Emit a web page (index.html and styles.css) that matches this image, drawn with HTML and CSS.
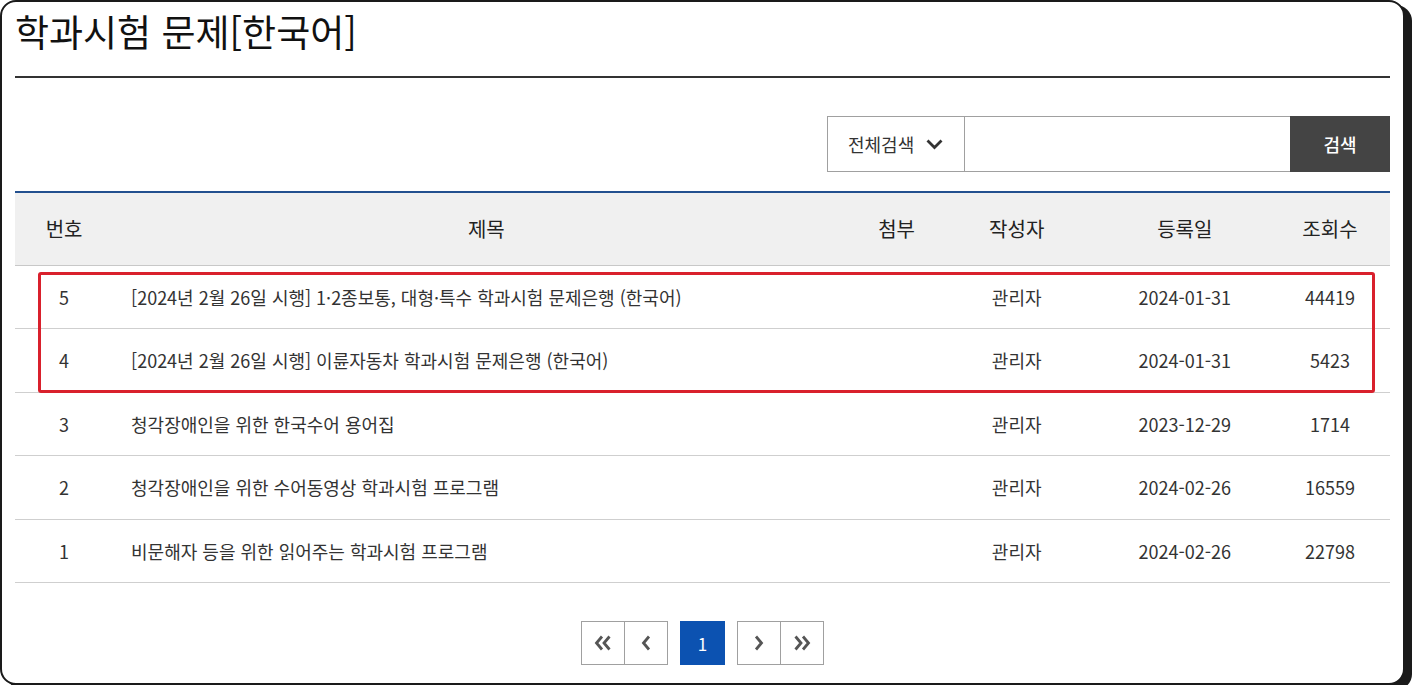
FILE: index.html
```html
<!DOCTYPE html>
<html lang="ko">
<head>
<meta charset="utf-8">
<title>학과시험 문제[한국어]</title>
<link rel="stylesheet" href="styles.css">
</head>
<body>
<div class="frame">
  <h1 class="page-title">학과시험 문제[한국어]</h1>

  <form class="search">
    <div class="search-select">
      <span>전체검색</span>
      <svg class="chev-down" width="17" height="11" viewBox="0 0 17 11"><path d="M1.5 1.5 L8.5 8.5 L15.5 1.5" fill="none" stroke="#333" stroke-width="2.8"/></svg>
    </div>
    <input class="search-input" type="text" aria-label="검색어">
    <button class="search-btn" type="button">검색</button>
  </form>

  <div class="board">
    <table class="board-table">
      <colgroup>
        <col class="c-no"><col class="c-title"><col class="c-file"><col class="c-writer"><col class="c-date"><col class="c-hit">
      </colgroup>
      <thead>
        <tr><th>번호</th><th>제목</th><th>첨부</th><th>작성자</th><th>등록일</th><th>조회수</th></tr>
      </thead>
      <tbody>
        <tr><td>5</td><td class="t">[2024년 2월 26일 시행] 1·2종보통, 대형·특수 학과시험 문제은행 (한국어)</td><td></td><td>관리자</td><td>2024-01-31</td><td>44419</td></tr>
        <tr><td>4</td><td class="t">[2024년 2월 26일 시행] 이륜자동차 학과시험 문제은행 (한국어)</td><td></td><td>관리자</td><td>2024-01-31</td><td>5423</td></tr>
        <tr><td>3</td><td class="t">청각장애인을 위한 한국수어 용어집</td><td></td><td>관리자</td><td>2023-12-29</td><td>1714</td></tr>
        <tr><td>2</td><td class="t">청각장애인을 위한 수어동영상 학과시험 프로그램</td><td></td><td>관리자</td><td>2024-02-26</td><td>16559</td></tr>
        <tr><td>1</td><td class="t">비문해자 등을 위한 읽어주는 학과시험 프로그램</td><td></td><td>관리자</td><td>2024-02-26</td><td>22798</td></tr>
      </tbody>
    </table>
    <div class="highlight"></div>
  </div>

  <nav class="paging">
    <div class="pg-group">
      <a class="pg" href="#" aria-label="처음"><svg width="18" height="16" viewBox="0 0 18 16"><path d="M8 1.5 L2.5 8 L8 14.5 M15.5 1.5 L10 8 L15.5 14.5" fill="none" stroke="#555" stroke-width="2.8"/></svg></a>
      <a class="pg" href="#" aria-label="이전"><svg width="10" height="16" viewBox="0 0 10 16"><path d="M8 1.5 L2.5 8 L8 14.5" fill="none" stroke="#555" stroke-width="2.8"/></svg></a>
    </div>
    <a class="pg pg-on" href="#">1</a>
    <div class="pg-group">
      <a class="pg" href="#" aria-label="다음"><svg width="10" height="16" viewBox="0 0 10 16"><path d="M2 1.5 L7.5 8 L2 14.5" fill="none" stroke="#555" stroke-width="2.8"/></svg></a>
      <a class="pg" href="#" aria-label="끝"><svg width="18" height="16" viewBox="0 0 18 16"><path d="M2.5 1.5 L8 8 L2.5 14.5 M10 1.5 L15.5 8 L10 14.5" fill="none" stroke="#555" stroke-width="2.8"/></svg></a>
    </div>
  </nav>
</div>
</body>
</html>
```

FILE: styles.css
```css
* { box-sizing: border-box; }

html, body {
  margin: 0;
  padding: 0;
  background: #ffffff;
}

body {
  font-family: "Noto Sans CJK KR", "Noto Sans", sans-serif;
  color: #333;
}

.frame {
  width: 1405px;
  height: 685px;
  border: 2px solid #1a1a1a;
  border-radius: 16px;
  box-shadow: 7px 5px 0 #1a1a1a;
  padding: 0 13px;
  background: #fff;
  overflow: hidden;
}

.page-title {
  margin: 0;
  padding: 6px 0 0;
  height: 76px;
  border-bottom: 2px solid #333;
  font-size: 37px;
  font-weight: 400;
  line-height: 46px;
  color: #111;
}

.search {
  display: flex;
  justify-content: flex-end;
  margin-top: 38px;
  height: 56px;
}

.search-select {
  width: 137px;
  height: 56px;
  border: 1px solid #a0a0a0;
  border-right: none;
  display: flex;
  align-items: center;
  padding-left: 20px;
  gap: 12px;
  font-size: 18px;
  color: #333;
}

.chev-down { margin-top: 1px; }

.search-input {
  width: 326px;
  height: 56px;
  border: 1px solid #a0a0a0;
  border-right: none;
  margin: 0;
  outline: none;
  font: inherit;
}

.search-btn {
  width: 100px;
  height: 56px;
  border: none;
  background: #444;
  color: #fff;
  font-family: inherit;
  font-size: 18px;
  font-weight: 500;
  margin: 0;
  padding: 0;
}

.board {
  position: relative;
  margin-top: 19px;
}

.board-table {
  width: 100%;
  border-collapse: collapse;
  table-layout: fixed;
  border-top: 2px solid #23508f;
}

.c-no { width: 98px; }
.c-title { width: 746px; }
.c-file { width: 74px; }
.c-writer { width: 166px; }
.c-date { width: 170px; }
.c-hit { width: 120px; }

.board-table th {
  height: 73px;
  background: #f0f0f0;
  border-bottom: 1px solid #c8c8c8;
  font-size: 20px;
  font-weight: 400;
  color: #222;
  text-align: center;
  padding: 0;
}

.board-table td {
  height: 63.5px;
  border-bottom: 1px solid #cfcfcf;
  font-size: 18px;
  color: #333;
  text-align: center;
  padding: 0;
}

.board-table td.t {
  text-align: left;
  padding-left: 18px;
}

.highlight {
  position: absolute;
  left: 23px;
  top: 81px;
  width: 1337px;
  height: 121px;
  border: 3.5px solid #d9202c;
  border-radius: 3px;
  pointer-events: none;
}

.paging {
  display: flex;
  justify-content: center;
  align-items: center;
  gap: 12px;
  margin-top: 38px;
}

.pg-group {
  display: flex;
}

.pg {
  width: 44px;
  height: 44px;
  border: 1px solid #a0a0a0;
  display: flex;
  align-items: center;
  justify-content: center;
  text-decoration: none;
  background: #fff;
}

.pg-group .pg + .pg { margin-left: -1px; }

.pg-on {
  width: 45px;
  background: #0c52b1;
  border-color: #0c52b1;
  color: #fff;
  font-size: 17px;
}
```
